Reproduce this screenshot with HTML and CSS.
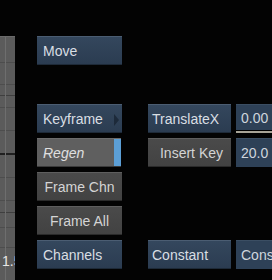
FILE: index.html
```html
<!DOCTYPE html>
<html>
<head>
<meta charset="utf-8">
<link rel="stylesheet" href="styles.css">
</head>
<body>
<div class="screen">
  <div class="graph"><span class="graph-label">1.5</span></div>
  <div class="panel">
    <div class="btn blue c1 r1">Move</div>
    <div class="btn blue c1 r3 has-arrow">Keyframe<span class="arrow"></span></div>
    <div class="btn blue c3 r3">TranslateX</div>
    <div class="field under c5 r3">0.00</div>
    <div class="btn light c1 r4 regen"><span class="italic">Regen</span><span class="bar"></span></div>
    <div class="btn gray center c3 r4">Insert Key</div>
    <div class="field c5 r4">20.0</div>
    <div class="btn gray center c1 r5">Frame Chn</div>
    <div class="btn gray center c1 r6">Frame All</div>
    <div class="btn blue c1 r7">Channels</div>
    <div class="btn blue c3 r7">Constant</div>
    <div class="field c5 r7">Constant</div>
  </div>
</div>
</body>
</html>
```
FILE: styles.css
```css
html, body {
  margin: 0;
  padding: 0;
  background: #030303;
}
body {
  width: 272px;
  height: 280px;
  overflow: hidden;
  font-family: "Liberation Sans", Arial, sans-serif;
  font-size: 14px;
}
.screen {
  display: flex;
  align-items: flex-start;
  height: 280px;
}
.graph {
  flex: 0 0 15px;
  height: 244px;
  margin-top: 36px;
  display: flex;
  flex-direction: column;
  justify-content: flex-end;
  overflow: hidden;
  border-top: 1px solid #6a6a6a;
  box-sizing: border-box;
  background:
    linear-gradient(to right, transparent 5px, #6e6e6e 5px, #6e6e6e 6px, transparent 6px),
    linear-gradient(to bottom,
      #5b5b5b 0 25px, #4d4d4d 25px 26px,
      #5b5b5b 26px 47px, #4d4d4d 47px 48px,
      #5b5b5b 48px 58px, #3f3f3f 58px 59px,
      #5b5b5b 59px 70px, #4d4d4d 70px 71px,
      #5b5b5b 71px 93px, #4d4d4d 93px 94px,
      #5b5b5b 94px 116px, #202020 116px 118px,
      #5b5b5b 118px 140px, #4d4d4d 140px 141px,
      #5b5b5b 141px 163px, #4d4d4d 163px 164px,
      #5b5b5b 164px 175px, #3f3f3f 175px 176px,
      #5b5b5b 176px 190px, #4d4d4d 190px 191px,
      #5b5b5b 191px 210px, #4d4d4d 210px 211px,
      #5b5b5b 211px);
}
.graph-label {
  color: #e6e6e6;
  padding-left: 2px;
  line-height: 16px;
  margin-bottom: 11px;
  white-space: nowrap;
}
.panel {
  margin-left: 22px;
  margin-top: 36px;
  display: grid;
  grid-template-columns: 85px 26px 83px 5px 40px;
  grid-template-rows: repeat(7, 29px);
  row-gap: 5px;
}
.c1 { grid-column: 1; }
.c3 { grid-column: 3; }
.c5 { grid-column: 5; }
.r1 { grid-row: 1; }
.r3 { grid-row: 3; }
.r4 { grid-row: 4; }
.r5 { grid-row: 5; }
.r6 { grid-row: 6; }
.r7 { grid-row: 7; }

.btn {
  box-sizing: border-box;
  display: flex;
  align-items: center;
  padding-left: 6px;
  color: #d9dee3;
  white-space: nowrap;
  overflow: hidden;
  position: relative;
}
.c3.btn { padding-left: 4px; }
.blue {
  background: linear-gradient(#34475d, #2b3c51);
  border-top: 1px solid #4b5d72;
  border-bottom: 1px solid #1e2a38;
}
.gray {
  background: linear-gradient(#4a4a4a, #424242);
  border-top: 1px solid #5e5e5e;
  border-bottom: 1px solid #2a2a2a;
  color: #d4d4d4;
}
.center {
  justify-content: center;
  padding-left: 0;
}
.light {
  background: #5f5f5f;
  border-top: 1px solid #6c6c6c;
  border-bottom: 1px solid #3a3a3a;
  color: #e0e0e0;
  width: 84px;
}
.italic { font-style: italic; }
.bar {
  position: absolute;
  right: 0;
  top: 0;
  bottom: 0;
  width: 7px;
  background: #5c9fd6;
}
.arrow {
  position: absolute;
  right: 3px;
  top: 9px;
  width: 0;
  height: 0;
  border-top: 6px solid transparent;
  border-bottom: 6px solid transparent;
  border-left: 5px solid #1d2a3a;
}
.field {
  box-sizing: border-box;
  background: #2e4157;
  color: #cfd6dd;
  padding-left: 5px;
  display: flex;
  align-items: center;
  white-space: nowrap;
  overflow: hidden;
  border-top: 1px solid #3b4e63;
}
.under {
  height: 26px;
  box-shadow: 0 1px 0 #000, 0 3px 0 #a8a497;
}
```
